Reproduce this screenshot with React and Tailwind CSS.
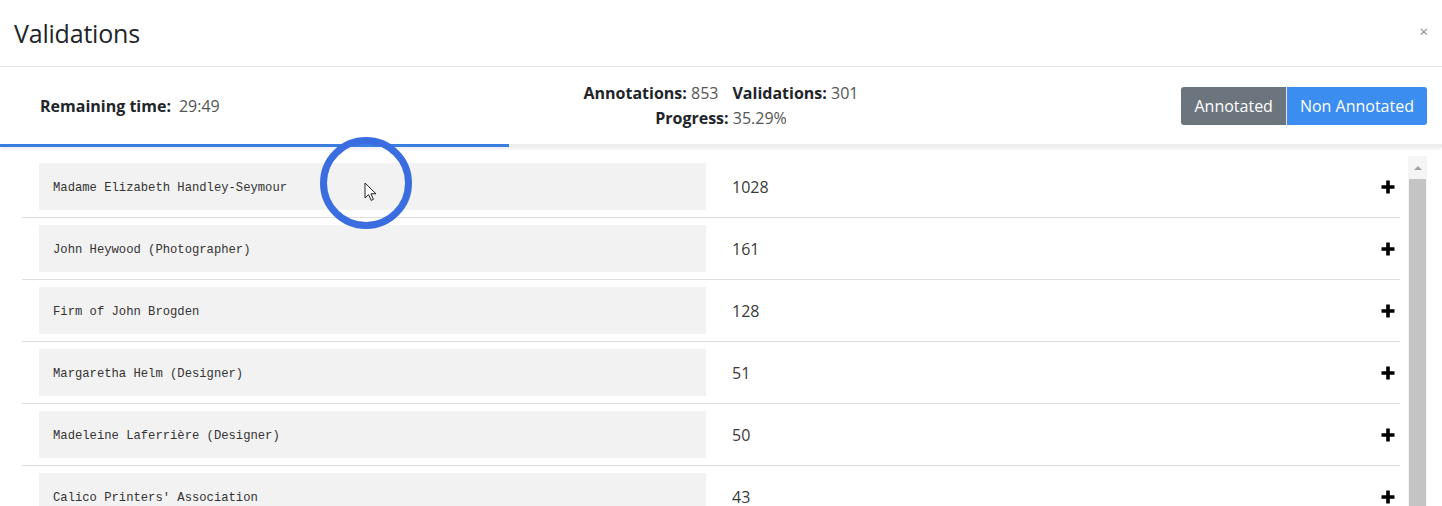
import React from 'react';

const rows = [
  { name: 'Madame Elizabeth Handley-Seymour', count: 1028 },
  { name: 'John Heywood (Photographer)', count: 161 },
  { name: 'Firm of John Brogden', count: 128 },
  { name: 'Margaretha Helm (Designer)', count: 51 },
  { name: 'Madeleine Laferrière (Designer)', count: 50 },
  { name: "Calico Printers' Association", count: 43 },
];

const PlusIcon = () => (
  <svg width="16" height="16" viewBox="0 0 16 16">
    <path d="M8 1.5v13M1.5 8h13" stroke="#000" strokeWidth="3.6" />
  </svg>
);

const Cursor = () => (
  <svg width="14" height="20" viewBox="0 0 14 20">
    <path d="M1 1v15l3.6-3.4 2.6 5.8 2.2-1-2.5-5.6H12z" fill="#fff" stroke="#222" strokeWidth="1" strokeLinejoin="round" />
  </svg>
);

export default function App() {
  return (
    <div className="relative h-[506px] w-[1442px] overflow-hidden bg-white text-[#212529]" style={{ fontFamily: '"Open Sans", "Noto Sans", sans-serif' }}>
      {/* Header */}
      <div className="flex h-[67px] items-center justify-between border-b border-[#e5e5e5] pl-[14px] pr-[14px]">
        <h1 className="text-[25px] leading-none tracking-[-0.2px] text-[#212529]">Validations</h1>
        <span className="pb-[4px] text-[15px] leading-none text-[#888]">×</span>
      </div>

      {/* Stats */}
      <div className="grid h-[77px] grid-cols-3 items-center">
        <div className="pl-[40px] pt-[1px] text-[16px]">
          <span className="font-bold">Remaining time:</span>
          <span className="ml-[8px] text-[#555]">29:49</span>
        </div>
        <div className="text-center text-[16px] leading-[25px]">
          <div>
            <span className="font-bold">Annotations:</span> <span className="text-[#555]">853</span>
            <span className="ml-[14px] font-bold">Validations:</span> <span className="text-[#555]">301</span>
          </div>
          <div>
            <span className="font-bold">Progress:</span> <span className="text-[#555]">35.29%</span>
          </div>
        </div>
        <div className="flex justify-end pr-[15px]">
          <button className="h-[38px] rounded-l-[3px] border-r border-[#e5e5e5] bg-[#6c757d] px-[13px] text-[16px] text-white">Annotated</button>
          <button className="h-[38px] rounded-r-[3px] bg-[#3b8df0] px-[13px] text-[16px] text-white">Non Annotated</button>
        </div>
      </div>

      {/* Progress bar */}
      <div className="h-[3px] w-full bg-[#ececec] shadow-[0_2px_3px_rgba(0,0,0,0.08)]">
        <div className="h-full bg-[#3a7fe0]" style={{ width: '35.29%' }} />
      </div>

      {/* List */}
      <div className="flex pt-[9px]">
        <div className="ml-[22px] w-[1378px]">
          {rows.map((r) => (
            <div key={r.name} className="flex items-center border-b border-[#dedede] py-[7px] pl-[17px] pr-[4px]">
              <div className="flex h-[47px] w-[667px] items-center bg-[#f2f2f2] pl-[14px] pt-[4px] text-[12.2px] text-[#333]" style={{ fontFamily: '"Liberation Mono", monospace' }}>
                {r.name}
              </div>
              <div className="ml-[26px] flex-1 text-[16px] text-[#3a3a3a]">{r.count}</div>
              <PlusIcon />
            </div>
          ))}
        </div>
        <div className="ml-[8px] flex h-[360px] w-[19px] flex-col bg-[#f5f5f5]">
          <div className="flex h-[23px] items-center justify-center">
            <div className="h-0 w-0 border-x-[4px] border-b-[4px] border-x-transparent border-b-[#a3a3a3]" />
          </div>
          <div className="mx-[1px] flex-1 bg-[#c4c4c4]" />
        </div>
      </div>

      {/* Recording cursor highlight */}
      <div className="absolute left-[320px] top-[137px] h-[92px] w-[92px] rounded-full border-[7px] border-[#3a6ee0]" />
      <div className="absolute left-[364px] top-[182px]">
        <Cursor />
      </div>
    </div>
  );
}
